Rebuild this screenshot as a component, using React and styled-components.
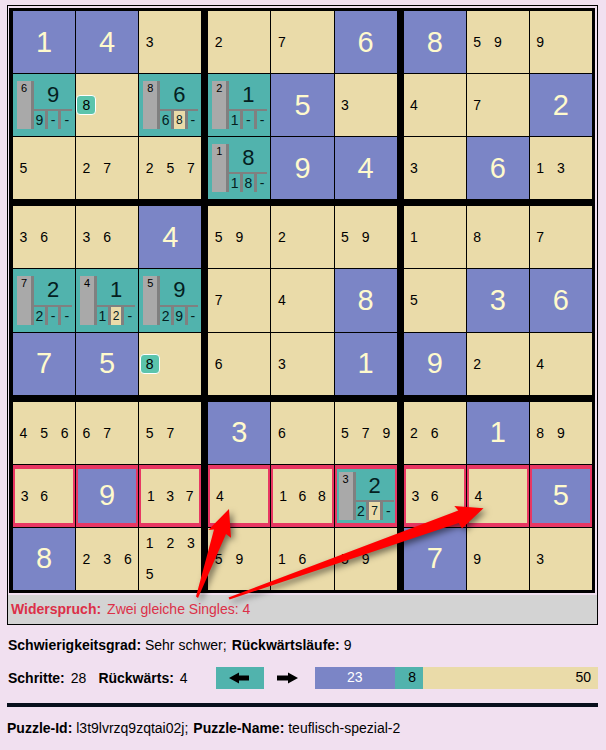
import React from "react";
import styled, { createGlobalStyle } from "styled-components";

const GlobalStyle = createGlobalStyle`
  *, *::before, *::after { box-sizing: border-box; }
  body {
    margin: 0;
    background: #f1e0f0;
    color: #000;
    font: 14px/16px "Liberation Sans", Arial, sans-serif;
  }
`;

const color = {
  given: "#7b85c6",
  open: "#eadba9",
  step: "#51b3ad",
  alert: "#e83763",
};

const Page = styled.main`
  padding: 5px 8px 12px 7px;
`;

const Frame = styled.section`
  position: relative;
  border: 1px solid #000;
`;

const Board = styled.div`
  margin: 2px 2px 2px 1px;
  padding: 3px 3px 3px 4px;
  background: #000;
  display: grid;
  grid-template-columns: repeat(3, 1fr);
  gap: 7px;
`;

const Block = styled.div`
  display: grid;
  grid-template-columns: repeat(3, minmax(0, 1fr));
  gap: 1px;
`;

const Cell = styled.div`
  aspect-ratio: 1;
  min-height: 0;
  overflow: hidden;
  background: ${(p) => color[p.$kind]};
  border: ${(p) => (p.$marked ? `solid ${color.alert}` : "none")};
  border-width: ${(p) => (p.$marked ? "4px 2px" : "0")};
`;

const Given = styled(Cell)`
  display: flex;
  align-items: center;
  justify-content: center;
  padding-bottom: 1px;
  color: #fffacd;
  font-size: 29px;
  line-height: 32px;
`;

const Candidates = styled(Cell)`
  display: grid;
  grid-template-columns: repeat(3, 1fr);
  align-items: center;
  justify-items: center;
`;

const Chosen = styled.span`
  width: 20px;
  height: 20px;
  border: 1px solid #fff;
  border-radius: 4px;
  background: #5bc4ac;
  line-height: 18px;
  text-align: center;
`;

const Step = styled(Cell)`
  display: grid;
  grid-template-columns: 17px 1fr;
  padding: ${(p) => (p.$marked ? "3px 1px 3px 2px" : "7px 3px 7px 4px")};
  color: #04201f;
`;

const StepIndex = styled.span`
  border-right: 3px solid #808080;
  background: #a9a9a9;
  color: #000;
  font-size: 11px;
  line-height: 14px;
  text-align: center;
`;

const StepBody = styled.div`
  display: grid;
  grid-template-rows: 1fr 20px;
`;

const StepValue = styled.span`
  font-size: 22px;
  line-height: 27px;
  text-align: center;
`;

const StepOptions = styled.div`
  display: grid;
  grid-template-columns: 14fr 14fr 11fr;
  border-top: 2px solid #808080;
`;

const StepOption = styled.span`
  border-right: 3px solid #808080;
  background: ${(p) => (p.$tried ? color.open : "transparent")};
  font-size: ${(p) => (p.$tried ? "12px" : "14px")};
  line-height: 18px;
  text-align: center;
  &:last-child { border-right: 0; }
`;

const Arrows = styled.svg`
  position: absolute;
  top: 0;
  left: 0;
  width: 100%;
  height: auto;
  overflow: visible;
  pointer-events: none;
  filter: drop-shadow(3px 3px 3px rgba(0, 0, 0, 0.5));
`;

const Status = styled.p`
  display: flex;
  gap: 6px;
  margin: 0;
  padding: 6px 3px 7px;
  background: #d3d3d3;
  color: #dc3048;
`;

const InfoLine = styled.p`
  display: flex;
  gap: 5px;
  margin: 12px 0 0 1px;
`;

const Controls = styled.div`
  display: flex;
  align-items: center;
  margin: 14px 0 0 1px;
`;

const Counters = styled.div`
  display: flex;
  gap: 12px;
  margin-right: 28px;
`;

const Counter = styled.span`
  display: flex;
  gap: 6px;
`;

const DirectionButton = styled.button`
  display: flex;
  align-items: center;
  justify-content: center;
  width: 48px;
  height: 22px;
  padding: 0;
  border: 0;
  background: ${(p) => (p.$active ? color.step : "transparent")};
`;

const Progress = styled.div`
  display: grid;
  grid-template-columns: 23fr 8fr 50fr;
  flex: 1;
  height: 22px;
  margin-left: 3px;
  line-height: 21px;
`;

const Portion = styled.span`
  padding-right: ${(p) => (p.$centered ? "0" : "7px")};
  background: ${(p) => color[p.$kind]};
  color: ${(p) => (p.$kind === "given" ? "#fff" : "#000")};
  text-align: ${(p) => (p.$centered ? "center" : "right")};
`;

const Rule = styled.hr`
  height: 4px;
  margin: 14px 0 13px;
  border: 0;
  background: #08101c;
`;

const PuzzleLine = styled.p`
  display: flex;
  gap: 5px;
  margin: 0;
`;

const given = (value) => ({ type: "given", value });
const open = (...values) => ({ type: "open", values });
const chosen = (value) => ({ type: "chosen", value });
const step = (index, value, options, tried) => ({ type: "step", index, value, options, tried });

const rows = [
  [given(1), given(4), open(3), open(2), open(7), given(6), given(8), open(5, 9), open(9)],
  [step(6, 9, "9--"), chosen(8), step(8, 6, "68-", 1), step(2, 1, "1--"), given(5), open(3), open(4), open(7), given(2)],
  [open(5), open(2, 7), open(2, 5, 7), step(1, 8, "18-"), given(9), given(4), open(3), given(6), open(1, 3)],
  [open(3, 6), open(3, 6), given(4), open(5, 9), open(2), open(5, 9), open(1), open(8), open(7)],
  [step(7, 2, "2--"), step(4, 1, "12-", 1), step(5, 9, "29-"), open(7), open(4), given(8), open(5), given(3), given(6)],
  [given(7), given(5), chosen(8), open(6), open(3), given(1), given(9), open(2), open(4)],
  [open(4, 5, 6), open(6, 7), open(5, 7), given(3), open(6), open(5, 7, 9), open(2, 6), given(1), open(8, 9)],
  [open(3, 6), given(9), open(1, 3, 7), open(4), open(1, 6, 8), step(3, 2, "27-", 1), open(3, 6), open(4), given(5)],
  [given(8), open(2, 3, 6), open(1, 2, 3, 5), open(5, 9), open(1, 6), open(5, 9), given(7), open(9), open(3)],
];

const conflictRow = 7;
const three = [0, 1, 2];

function SudokuCell({ cell, marked }) {
  if (cell.type === "given") {
    return <Given $kind="given" $marked={marked}>{cell.value}</Given>;
  }
  if (cell.type === "chosen") {
    return (
      <Candidates $kind="open" $marked={marked}>
        <Chosen>{cell.value}</Chosen>
      </Candidates>
    );
  }
  if (cell.type === "step") {
    return (
      <Step $kind="step" $marked={marked}>
        <StepIndex>{cell.index}</StepIndex>
        <StepBody>
          <StepValue>{cell.value}</StepValue>
          <StepOptions>
            {cell.options.split("").map((option, i) => (
              <StepOption key={i} $tried={i === cell.tried}>{option}</StepOption>
            ))}
          </StepOptions>
        </StepBody>
      </Step>
    );
  }
  return (
    <Candidates $kind="open" $marked={marked}>
      {cell.values.map((value) => <span key={value}>{value}</span>)}
    </Candidates>
  );
}

function ArrowIcon({ left }) {
  const shape = left
    ? "M0 6 10 .5V3.6H20V8.4H10V11.5Z"
    : "M21 6 11 .5V3.6H0V8.4H11V11.5Z";
  return (
    <svg width="21" height="12" viewBox="0 0 21 12" aria-hidden="true">
      <path d={shape} />
    </svg>
  );
}

export default function App() {
  return (
    <>
      <GlobalStyle />
      <Page>
        <Frame>
          <Board>
            {three.map((blockRow) =>
              three.map((blockCol) => (
                <Block key={`${blockRow}-${blockCol}`}>
                  {three.map((r) =>
                    three.map((c) => {
                      const row = blockRow * 3 + r;
                      const col = blockCol * 3 + c;
                      return (
                        <SudokuCell key={`${row}-${col}`} cell={rows[row][col]} marked={row === conflictRow} />
                      );
                    })
                  )}
                </Block>
              ))
            )}
          </Board>
          <Status role="status">
            <strong>Widerspruch:</strong>
            <span>Zwei gleiche Singles: 4</span>
          </Status>
          <Arrows viewBox="0 0 589 618" aria-hidden="true">
            <path fill="#f00" d="M188 590.5 206 523.5 200.3 524 221 503 223 531.7 218 528 190 592Z" />
            <path fill="#f00" d="M220.5 591.5 450.3 504.5 446.3 500 475.5 502.3 454 522.5 450.7 517 221.5 593.5Z" />
          </Arrows>
        </Frame>

        <InfoLine>
          <span><strong>Schwierigkeitsgrad:</strong> Sehr schwer;</span>
          <span><strong>Rückwärtsläufe:</strong> 9</span>
        </InfoLine>

        <Controls>
          <Counters>
            <Counter><strong>Schritte:</strong><span>28</span></Counter>
            <Counter><strong>Rückwärts:</strong><span>4</span></Counter>
          </Counters>
          <DirectionButton type="button" $active aria-label="Rückwärts"><ArrowIcon left /></DirectionButton>
          <DirectionButton type="button" aria-label="Vorwärts"><ArrowIcon /></DirectionButton>
          <Progress>
            <Portion $kind="given" $centered>23</Portion>
            <Portion $kind="step">8</Portion>
            <Portion $kind="open">50</Portion>
          </Progress>
        </Controls>

        <Rule />

        <PuzzleLine>
          <span><strong>Puzzle-Id:</strong> l3t9lvrzq9zqtai02j;</span>
          <span><strong>Puzzle-Name:</strong> teuflisch-spezial-2</span>
        </PuzzleLine>
      </Page>
    </>
  );
}
